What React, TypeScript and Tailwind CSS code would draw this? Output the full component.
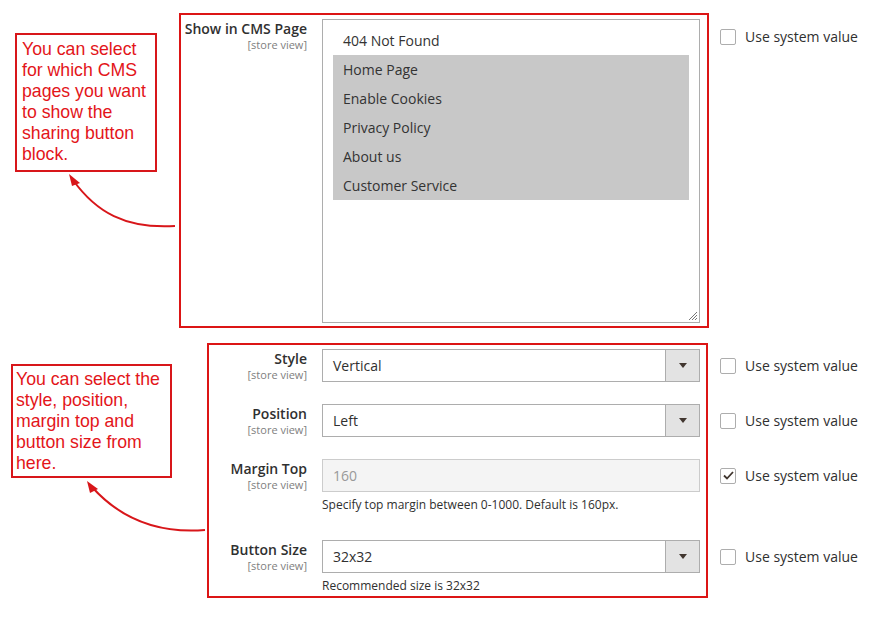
import { ReactNode } from "react";

const cmsPages = [
    { label: "404 Not Found", selected: false },
    { label: "Home Page", selected: true },
    { label: "Enable Cookies", selected: true },
    { label: "Privacy Policy", selected: true },
    { label: "About us", selected: true },
    { label: "Customer Service", selected: true },
];

function FieldLabel({ title, width }: { title: string; width: string }) {
    return (
        <div className={`${width} shrink-0 pt-[1px] text-right`}>
            <div className="text-[14px] font-semibold leading-[18px] text-[#303030]">{title}</div>
            <div className="text-[11px] leading-[13px] text-[#808080]">[store view]</div>
        </div>
    );
}

function Checkbox({ checked }: { checked?: boolean }) {
    return (
        <div className="flex items-center gap-[9px]">
            <span className="flex h-[16px] w-[16px] items-center justify-center rounded-[2px] border border-[#adadad] bg-white">
                {checked && (
                    <svg width="11" height="9" viewBox="0 0 11 9">
                        <path d="M1 4.5 L4 7.5 L10 1" fill="none" stroke="#41362f" strokeWidth="1.8" />
                    </svg>
                )}
            </span>
            <span className="text-[14px] leading-[18px] text-[#303030]">Use system value</span>
        </div>
    );
}

function Select({ value }: { value: string }) {
    return (
        <div className="flex h-[33px] w-[378px] border border-[#adadad] bg-white">
            <div className="flex flex-1 items-center pl-[10px] text-[14px] text-[#303030]">{value}</div>
            <div className="flex w-[34px] items-center justify-center border-l border-[#adadad] bg-[#e3e3e3]">
                <svg width="8" height="5" viewBox="0 0 8 5">
                    <polygon points="0,0 8,0 4,5" fill="#41362f" />
                </svg>
            </div>
        </div>
    );
}

function Callout({ className, children }: { className: string; children: ReactNode }) {
    return (
        <div
            className={`absolute border-2 border-[#d8161a] bg-white font-['Liberation_Sans',Arial,sans-serif] text-[17.7px] leading-[21px] text-[#e3151a] ${className}`}
        >
            {children}
        </div>
    );
}

export default function App() {
    return (
        <div className="relative h-[622px] w-[882px] overflow-hidden bg-white font-['Open_Sans',sans-serif]">
            {/* CMS pages */}
            <div className="flex items-start pl-[179px] pt-[13px]">
                <div className="flex h-[315px] w-[530px] border-2 border-[#dc1515] pb-[3px] pr-[7px] pt-[4px]">
                    <FieldLabel title="Show in CMS Page" width="w-[126px]" />
                    <div className="relative ml-[15px] flex-1 border border-[#adadad] bg-white px-[10px] pt-[6px]">
                        {cmsPages.map((page) => (
                            <div
                                key={page.label}
                                className={`flex h-[29px] items-center pl-[10px] text-[14px] text-[#333] ${
                                    page.selected ? "bg-[#c8c8c8]" : ""
                                }`}
                            >
                                {page.label}
                            </div>
                        ))}
                        <svg className="absolute bottom-[1px] right-[1px]" width="10" height="10" viewBox="0 0 10 10">
                            <path d="M9 1 L1 9 M9 4 L4 9 M9 7 L7 9" stroke="#777" strokeWidth="1" />
                        </svg>
                    </div>
                </div>
                <div className="ml-[11px] mt-[15px]">
                    <Checkbox />
                </div>
            </div>

            {/* Button settings */}
            <div className="mt-[15px] flex items-start pl-[207px]">
                <div className="flex h-[255px] w-[501px] flex-col border-2 border-[#dc1515] pr-[6px] pt-[4px]">
                    <div className="flex gap-[15px]">
                        <FieldLabel title="Style" width="w-[98px]" />
                        <Select value="Vertical" />
                    </div>
                    <div className="mt-[22px] flex gap-[15px]">
                        <FieldLabel title="Position" width="w-[98px]" />
                        <Select value="Left" />
                    </div>
                    <div className="mt-[22px] flex gap-[15px]">
                        <FieldLabel title="Margin Top" width="w-[98px]" />
                        <div>
                            <div className="flex h-[33px] w-[378px] items-center border border-[#cccccc] bg-[#f4f4f4] pl-[10px] text-[14px] text-[#999]">
                                160
                            </div>
                            <div className="mt-[4px] text-[12px] leading-[18px] text-[#303030]">
                                Specify top margin between 0-1000. Default is 160px.
                            </div>
                        </div>
                    </div>
                    <div className="mt-[26px] flex gap-[15px]">
                        <FieldLabel title="Button Size" width="w-[98px]" />
                        <div>
                            <Select value="32x32" />
                            <div className="mt-[4px] text-[12px] leading-[18px] text-[#303030]">
                                Recommended size is 32x32
                            </div>
                        </div>
                    </div>
                </div>
                <div className="ml-[12px] flex flex-col pt-[6px]">
                    <div className="flex h-[33px] items-center">
                        <Checkbox />
                    </div>
                    <div className="mt-[22px] flex h-[33px] items-center">
                        <Checkbox />
                    </div>
                    <div className="mt-[22px] flex h-[33px] items-center">
                        <Checkbox checked />
                    </div>
                    <div className="mt-[48px] flex h-[33px] items-center">
                        <Checkbox />
                    </div>
                </div>
            </div>

            {/* annotations */}
            <Callout className="left-[15px] top-[33px] h-[139px] w-[142px] pl-[5px] pt-[4px]">
                <div>You can select</div>
                <div>for which CMS</div>
                <div>pages you want</div>
                <div>to show the</div>
                <div>sharing button</div>
                <div>block.</div>
            </Callout>
            <Callout className="left-[11px] top-[364px] h-[114px] w-[161px] pl-[3px] pt-[3px]">
                <div>You can select the</div>
                <div>style, position,</div>
                <div>margin top and</div>
                <div>button size from</div>
                <div>here.</div>
            </Callout>
            <svg className="pointer-events-none absolute left-0 top-0" width="882" height="622">
                <path d="M175 226 C 125 229, 96 212, 73 180" fill="none" stroke="#d8161a" strokeWidth="2" />
                <polygon points="69,174 80,183 72,186" fill="#d8161a" />
                <path d="M205 530 C 155 534, 118 516, 92 487" fill="none" stroke="#d8161a" strokeWidth="2" />
                <polygon points="87,481 98,489 90,493" fill="#d8161a" />
            </svg>
        </div>
    );
}
